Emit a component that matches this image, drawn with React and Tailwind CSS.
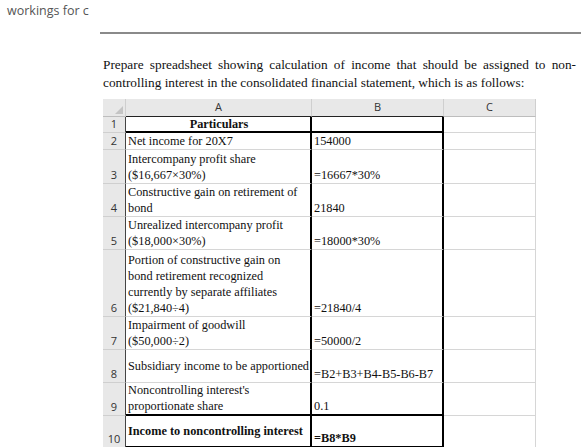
const rows = [
  { n: "1", a: "Particulars", b: "", h: 16, head: true },
  { n: "2", a: ["Net income for 20X7"], b: "154000", h: 17 },
  { n: "3", a: ["Intercompany profit share", "($16,667×30%)"], b: "=16667*30%", h: 34 },
  { n: "4", a: ["Constructive gain on retirement of", "bond"], b: "21840", h: 33 },
  { n: "5", a: ["Unrealized intercompany profit", "($18,000×30%)"], b: "=18000*30%", h: 33 },
  {
    n: "6",
    a: [
      "Portion of constructive gain on",
      "bond retirement recognized",
      "currently by separate affiliates",
      "($21,840÷4)",
    ],
    b: "=21840/4",
    h: 67,
  },
  { n: "7", a: ["Impairment of goodwill", "($50,000÷2)"], b: "=50000/2", h: 33 },
  { n: "8", a: ["Subsidiary income to be apportioned"], b: "=B2+B3+B4-B5-B6-B7", h: 33, center: true },
  { n: "9", a: ["Noncontrolling interest's", "proportionate share"], b: "0.1", h: 33, thick: true },
  { n: "10", a: ["Income to noncontrolling interest"], b: "=B8*B9", h: 32, center: true, bold: true, thick: true },
];

const serif = "font-['Liberation_Serif','Times_New_Roman',serif]";

function Row({ row }) {
  const bottom = row.head || row.thick ? "border-b-2 border-b-black" : "border-b border-b-[#d6d6d6]";
  return (
    <div className="flex" style={{ height: row.h }}>
      <div className="w-[23px] shrink-0 flex items-end justify-center bg-[#e8e8e8] border-r border-r-[#444] border-b border-b-[#cfcfcf] text-[11px] text-[#333] font-['Open_Sans',sans-serif] leading-[16px]">
        {row.n}
      </div>
      <div
        className={`w-[186px] shrink-0 flex flex-col pl-[2px] overflow-hidden border-r-2 border-r-black ${bottom} ${serif} text-[12.3px] leading-[16px] text-[#111] ${
          row.head ? "items-center justify-center font-bold" : row.center ? "justify-center" : "justify-end"
        } ${row.bold ? "font-bold" : ""}`}
      >
        {row.head ? row.a : row.a.map((t) => <div key={t} className="whitespace-nowrap">{t}</div>)}
      </div>
      <div
        className={`w-[132px] shrink-0 flex items-end px-[2px] border-r-2 border-r-black ${bottom} ${serif} text-[12.3px] leading-[16px] text-[#111] ${
          row.bold ? "font-bold" : ""
        }`}
      >
        {row.b}
      </div>
      <div className="w-[92px] shrink-0 border-r border-r-[#d6d6d6] border-b border-b-[#d6d6d6]" />
    </div>
  );
}

export default function App() {
  return (
    <div className="w-[581px] h-[447px] bg-white overflow-hidden">
      <div className="pl-[7px] pt-[2px] text-[12.5px] leading-[17px] text-[#555] font-['Open_Sans',sans-serif]">
        workings for c
      </div>
      <div className="ml-[100px] mt-[13px] h-[2px] bg-[#8a8a8a]" />
      <div className="pl-[103px] pr-[5px] pt-[22px]">
        <div className={`${serif} text-[13.3px] leading-[18px] text-[#111]`}>
          <p className="text-justify [text-align-last:justify]">
            Prepare spreadsheet showing calculation of income that should be assigned to non-
          </p>
          <p>controlling interest in the consolidated financial statement, which is as follows:</p>
        </div>
        <div className="mt-[7px] w-[433px]">
          <div className="flex h-[18px]">
            <div className="w-[23px] shrink-0 relative bg-[#e8e8e8] border-r border-r-[#cfcfcf] border-b border-b-[#bdbdbd]">
              <svg className="absolute right-[2px] bottom-[2px]" width="8" height="8" viewBox="0 0 8 8">
                <polygon points="8,0 8,8 0,8" fill="#c4c4c4" />
              </svg>
            </div>
            {["A", "B", "C"].map((c, i) => (
              <div
                key={c}
                className={`${["w-[186px]", "w-[132px]", "w-[92px]"][i]} shrink-0 flex items-center justify-center bg-[#e8e8e8] border-r border-r-[#cfcfcf] ${
                  i < 2 ? "border-b border-b-[#222]" : "border-b border-b-[#bdbdbd]"
                } text-[11px] text-[#333] font-['Open_Sans',sans-serif]`}
              >
                {c}
              </div>
            ))}
          </div>
          {rows.map((r) => (
            <Row key={r.n} row={r} />
          ))}
        </div>
      </div>
    </div>
  );
}
